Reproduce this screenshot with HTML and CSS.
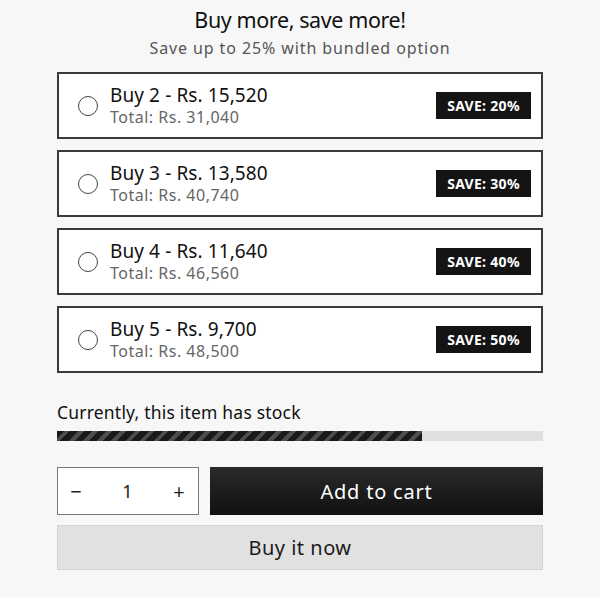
FILE: index.html
```html
<!DOCTYPE html>
<html>
<head>
<meta charset="utf-8">
<link rel="stylesheet" href="styles.css">
</head>
<body>
<main class="wrap">
  <h1 class="title">Buy more, save more!</h1>
  <p class="sub">Save up to 25% with bundled option</p>
  <div class="options">
    <label class="opt">
      <span class="radio"></span>
      <span class="info"><span class="name">Buy 2 - Rs. 15,520</span><span class="total">Total: Rs. 31,040</span></span>
      <span class="badge">SAVE: 20%</span>
    </label>
    <label class="opt">
      <span class="radio"></span>
      <span class="info"><span class="name">Buy 3 - Rs. 13,580</span><span class="total">Total: Rs. 40,740</span></span>
      <span class="badge">SAVE: 30%</span>
    </label>
    <label class="opt">
      <span class="radio"></span>
      <span class="info"><span class="name">Buy 4 - Rs. 11,640</span><span class="total">Total: Rs. 46,560</span></span>
      <span class="badge">SAVE: 40%</span>
    </label>
    <label class="opt">
      <span class="radio"></span>
      <span class="info"><span class="name">Buy 5 - Rs. 9,700</span><span class="total">Total: Rs. 48,500</span></span>
      <span class="badge">SAVE: 50%</span>
    </label>
  </div>
  <p class="stock">Currently, this item has stock</p>
  <div class="bar"><div class="fill" style="width:75%"></div></div>
  <div class="row">
    <div class="qty"><span class="qbtn">−</span><span class="qval">1</span><span class="qbtn">+</span></div>
    <button class="cart">Add to cart</button>
  </div>
  <button class="buy">Buy it now</button>
</main>
</body>
</html>
```
FILE: styles.css
```css
* { box-sizing: border-box; }
body {
  margin: 0;
  background: #f7f7f7;
  font-family: "Noto Sans", "Open Sans", sans-serif;
  color: #111;
}
.wrap {
  width: 486px;
  margin-left: 57px;
  padding-top: 6px;
  display: flex;
  flex-direction: column;
}
.title {
  margin: 0;
  font-size: 21.5px;
  line-height: 28px;
  font-weight: 400;
  text-align: center;
  letter-spacing: -0.4px;
}
.sub {
  margin: 3px 0 0;
  font-size: 16px;
  line-height: 22px;
  text-align: center;
  color: #555;
  letter-spacing: 0.9px;
}
.options {
  margin-top: 13px;
  display: flex;
  flex-direction: column;
  gap: 11px;
}
.opt {
  height: 67px;
  background: #fff;
  border: 2px solid #3a3a3a;
  display: flex;
  align-items: center;
  padding: 0 10px 0 19px;
}
.radio {
  width: 20px;
  height: 20px;
  border: 1.3px solid #444;
  border-radius: 50%;
  flex: none;
}
.info {
  display: flex;
  flex-direction: column;
  margin-left: 12px;
  flex: 1;
}
.name {
  font-size: 19px;
  line-height: 22px;
  color: #111;
  letter-spacing: 0.1px;
}
.total {
  font-size: 16px;
  line-height: 22px;
  color: #666;
  letter-spacing: 0.5px;
}
.badge {
  background: #141414;
  color: #fff;
  font-weight: 700;
  font-size: 14px;
  letter-spacing: 0.3px;
  height: 27px;
  width: 95px;
  display: flex;
  align-items: center;
  justify-content: center;
}
.stock {
  margin: 28px 0 0;
  font-size: 17.5px;
  line-height: 22px;
  color: #111;
  letter-spacing: 0.2px;
}
.bar {
  margin-top: 8px;
  height: 10px;
  background: #e0e0e0;
}
.fill {
  height: 100%;
  background: repeating-linear-gradient(-45deg, #1a1a1a 0 6px, #4d4d4d 6px 10px);
}
.row {
  margin-top: 26px;
  display: flex;
  gap: 11px;
}
.qty {
  width: 142px;
  height: 48px;
  background: #fff;
  border: 1.5px solid #777;
  display: flex;
  align-items: center;
  justify-content: space-between;
  padding: 0 11px 0 10px;
  font-size: 18px;
}
.qbtn { width: 16px; text-align: center; color: #222; font-size: 20px; }
.qval { color: #222; }
.cart {
  flex: 1;
  height: 48px;
  border: none;
  background: linear-gradient(#2a2a2a, #111);
  color: #fff;
  font-family: inherit;
  font-size: 20px;
  letter-spacing: 0.8px;
}
.buy {
  margin-top: 10px;
  height: 45px;
  border: 1.5px solid #d4d4d4;
  background: #e1e1e1;
  color: #1a1a1a;
  font-family: inherit;
  font-size: 20px;
  letter-spacing: 0.5px;
}
```
